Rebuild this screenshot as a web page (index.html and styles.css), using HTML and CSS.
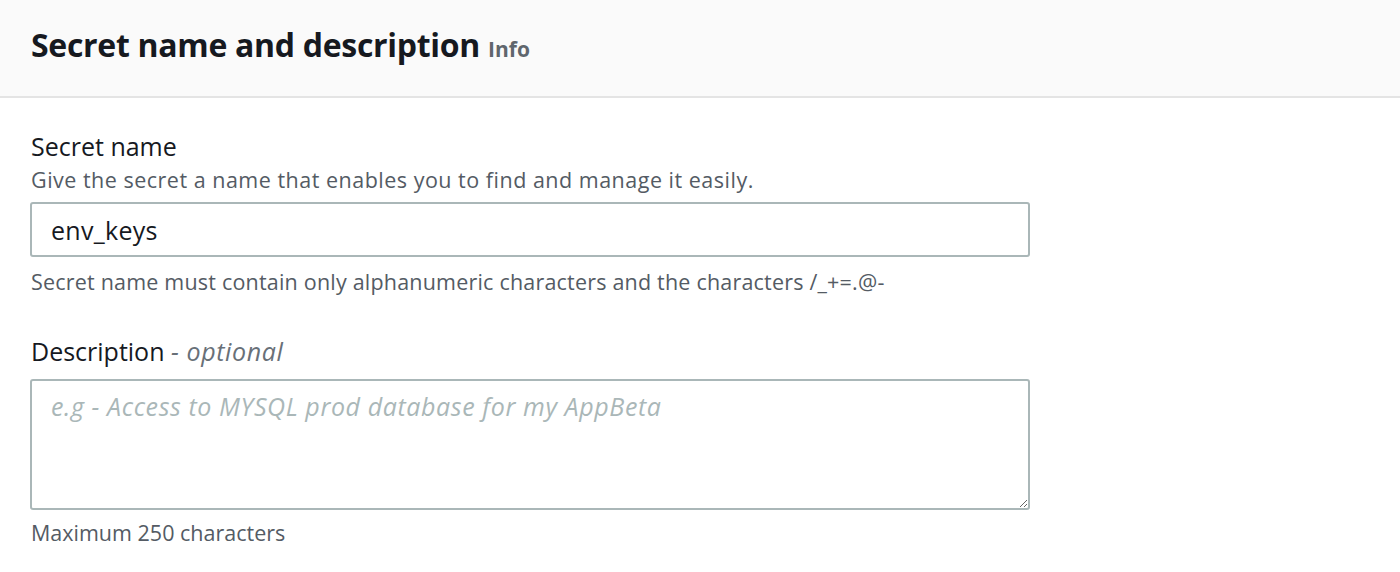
FILE: index.html
```html
<!DOCTYPE html>
<html>
<head>
<meta charset="utf-8">
<link rel="stylesheet" href="styles.css">
</head>
<body>
<div class="panel">
  <div class="panel-header">
    <h2 class="title">Secret name and description <span class="info">Info</span></h2>
  </div>
  <div class="panel-body">
    <div class="field">
      <div class="label">Secret name</div>
      <div class="desc">Give the secret a name that enables you to find and manage it easily.</div>
      <input class="input" type="text" value="env_keys">
      <div class="constraint">Secret name must contain only alphanumeric characters and the characters /_+=.@-</div>
    </div>
    <div class="field field-gap">
      <div class="label">Description <span class="optional">- optional</span></div>
      <textarea class="textarea" placeholder="e.g - Access to MYSQL prod database for my AppBeta"></textarea>
      <div class="constraint constraint-max">Maximum 250 characters</div>
    </div>
  </div>
</div>
</body>
</html>
```

FILE: styles.css
```css
html, body {
  margin: 0;
  padding: 0;
  background: #ffffff;
}
body {
  font-family: "Open Sans", "Noto Sans", sans-serif;
  color: #16191f;
  width: 1400px;
  height: 572px;
  overflow: hidden;
}
.panel-header {
  background: #fafafa;
  border-bottom: 2px solid #e4e4e4;
  height: 98px;
  box-sizing: border-box;
  padding: 22px 31px 0;
}
.title {
  margin: 0;
  font-size: 32px;
  font-weight: 700;
  letter-spacing: -0.3px;
  line-height: 46px;
}
.info {
  font-size: 21px;
  color: #5f666d;
  font-weight: 700;
  letter-spacing: 0;
}
.panel-body {
  padding: 32px 31px 0;
}
.label {
  font-size: 25px;
  line-height: 32px;
  color: #16191f;
}
.optional {
  font-style: italic;
  color: #687078;
  letter-spacing: 0.6px;
}
.desc {
  font-size: 21.5px;
  line-height: 28px;
  margin-top: 4px;
  color: #545b64;
  letter-spacing: 0.5px;
}
.input {
  display: block;
  box-sizing: border-box;
  width: 1000px;
  height: 55px;
  margin: 8px 0 0 -1px;
  border: 2px solid #aab7b8;
  border-radius: 3px;
  padding: 0 19px;
  font-family: inherit;
  font-size: 25px;
  letter-spacing: 0.3px;
  color: #16191f;
  outline: none;
}
.constraint {
  font-size: 21.5px;
  line-height: 28px;
  color: #545b64;
  margin-top: 11px;
  letter-spacing: 0.2px;
}
.constraint-max {
  margin-top: 9px;
  letter-spacing: 0;
}
.field-gap {
  margin-top: 39px;
}
.textarea {
  display: block;
  box-sizing: border-box;
  width: 1000px;
  height: 131px;
  margin: 12px 0 0 -1px;
  border: 2px solid #aab7b8;
  border-radius: 3px;
  padding: 8px 19px;
  font-family: inherit;
  font-size: 25px;
  color: #16191f;
  outline: none;
  resize: vertical;
}
.textarea::placeholder {
  font-style: italic;
  color: #aab7b8;
  letter-spacing: 0.6px;
}
```
